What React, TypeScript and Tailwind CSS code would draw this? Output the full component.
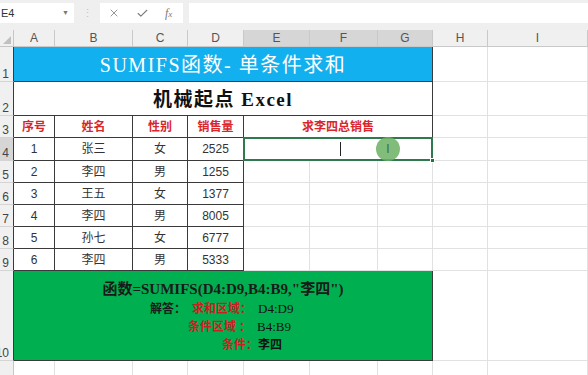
import React from "react";
import { X, Check } from "lucide-react";

const sans = "font-['Liberation_Sans','Noto_Sans_CJK_SC',sans-serif]";
const serif = "font-['Liberation_Serif','Noto_Sans_CJK_SC',serif]";

const cols = ["A", "B", "C", "D", "E", "F", "G", "H", "I"];
const rowHeights = "grid-rows-[17px_35px_34px_22px_23px_22px_22px_22px_22px_22px_90px_22px]";

const data = [
  ["1", "张三", "女", "2525"],
  ["2", "李四", "男", "1255"],
  ["3", "王五", "女", "1377"],
  ["4", "李四", "男", "8005"],
  ["5", "孙七", "女", "6777"],
  ["6", "李四", "男", "5333"],
];

const RowHead = ({ n, dark, active }: { n?: number; dark?: boolean; active?: boolean }) => (
  <div
    className={`flex items-end justify-end overflow-hidden border-b border-b-[#d4d4d4] pr-[4px] pb-[1px] text-[12px] leading-none text-[#444] ${
      active ? "bg-[#d6d6d6]" : "bg-[#f0f0f0]"
    } ${dark ? "border-r border-r-[#3a3a3a]" : "border-r border-r-[#c6c6c6]"}`}
  >
    {n}
  </div>
);

const Blank = () => <div className="border-b border-r border-[#e1e1e1] bg-white" />;

const Tail = () => (
  <>
    <Blank />
    <Blank />
  </>
);

export default function App() {
  return (
    <div className={`h-[375px] w-[588px] overflow-hidden bg-white ${sans}`}>
      {/* formula bar */}
      <div className="flex h-[30px] items-start bg-[#efefef] pt-[3px]">
        <div className="flex h-[20px] w-[74px] items-center justify-between bg-white pl-[1px] pr-[5px]">
          <span className="text-[11px] text-[#333]">E4</span>
          <span className="text-[7px] text-[#777]">▼</span>
        </div>
        <div className="flex h-[20px] w-[26px] items-center justify-center text-[11px] text-[#c4c4c4]">⋮</div>
        <div className="flex h-[20px] w-[83px] items-center gap-[16px] bg-white pl-[8px] text-[#7a7a7a]">
          <X size={12} strokeWidth={1.6} />
          <Check size={13} strokeWidth={2} />
          <span className="font-['Liberation_Serif',serif] text-[12px] italic">
            f<span className="text-[9px]">x</span>
          </span>
        </div>
        <div className="ml-[6px] h-[20px] flex-1 bg-white" />
      </div>

      {/* sheet */}
      <div className={`grid grid-cols-[14px_41px_78px_55px_56px_66px_68px_55px_55px_1fr] ${rowHeights}`}>
        {/* column headers */}
        <div className="relative border-b border-r border-[#c6c6c6] bg-[#f0f0f0]">
          <div className="absolute bottom-[2px] right-[2px] h-0 w-0 border-b-[8px] border-l-[8px] border-b-[#c0c0c0] border-l-transparent" />
        </div>
        {cols.map((c) => (
          <div
            key={c}
            className={`flex items-center justify-center border-b border-r border-[#c9c9c9] text-[12px] leading-none text-[#555] ${
              ["E", "F", "G"].includes(c) ? "bg-[#d6d6d6] text-[#333]" : "bg-[#f0f0f0]"
            }`}
          >
            {c}
          </div>
        ))}

        {/* row 1 */}
        <RowHead n={1} dark />
        <div
          className={`col-span-7 flex items-center justify-center border-b border-r border-[#3a3a3a] bg-[#12b0ee] pt-[2px] text-[20px] tracking-[1.5px] text-white ${serif}`}
        >
          SUMIFS函数- 单条件求和
        </div>
        <Tail />

        {/* row 2 */}
        <RowHead n={2} dark />
        <div
          className={`col-span-7 flex items-center justify-center border-b border-r border-[#3a3a3a] bg-white pt-[3px] text-[19px] font-bold tracking-[1.5px] text-[#111] ${serif}`}
        >
          机械起点 Excel
        </div>
        <Tail />

        {/* row 3 */}
        <RowHead n={3} dark />
        {["序号", "姓名", "性别", "销售量"].map((h) => (
          <div
            key={h}
            className="flex items-center justify-center border-b border-r border-[#3a3a3a] text-[12px] font-bold text-[#d9262b]"
          >
            {h}
          </div>
        ))}
        <div className="col-span-3 flex items-center justify-center border-b border-r border-[#3a3a3a] text-[12px] font-bold text-[#d9262b]">
          求李四总销售
        </div>
        <Tail />

        {/* rows 4-9 */}
        {data.map((r, i) => (
          <React.Fragment key={i}>
            <RowHead n={i + 4} dark active={i === 0} />
            {r.map((v, j) => (
              <div
                key={j}
                className="flex items-center justify-center border-b border-r border-[#3a3a3a] text-[12px] text-[#333]"
              >
                {v}
              </div>
            ))}
            {i === 0 ? (
              <div className="relative col-span-3 border-b border-r border-[#e1e1e1]">
                <div className="absolute -left-px -top-px bottom-[-1px] right-[-1px] border-2 border-[#2e7a4e]" />
                <div className="absolute bottom-[-3px] right-[-3px] h-[5px] w-[5px] border border-white bg-[#217346]" />
                <div className="absolute left-[96px] top-[4px] h-[14px] w-px bg-[#222]" />
                <div className="absolute left-[132px] top-[-1px] flex h-[24px] w-[24px] items-center justify-center rounded-full bg-[#6bb063]/85">
                  <span className="text-[12px] leading-none text-[#3d6d3a]">I</span>
                </div>
              </div>
            ) : (
              <>
                <Blank />
                <Blank />
                <Blank />
              </>
            )}
            <Tail />
          </React.Fragment>
        ))}

        {/* row 10 */}
        <RowHead n={10} dark />
        <div className={`col-span-7 flex flex-col border-b border-r border-[#3a3a3a] bg-[#00b050] pt-[9px] ${serif}`}>
          <div className="text-center text-[15px] font-bold leading-[18px] text-[#1a1a1a]">
            函数=SUMIFS(D4:D9,B4:B9,"李四")
          </div>
          <div className="mt-[2px] flex items-center pl-[136px] text-[12px] font-bold leading-[18px]">
            <span className="text-[#1a1a1a]">解答：</span>
            <span className="ml-[6px] text-[#c91f1f]">求和区域：</span>
            <span className="ml-[6px] text-[13px] font-normal text-[#111]">D4:D9</span>
          </div>
          <div className="flex items-center pl-[174px] text-[12px] font-bold leading-[18px]">
            <span className="text-[#c91f1f]">条件区域 ：</span>
            <span className="ml-[6px] text-[13px] font-normal text-[#111]">B4:B9</span>
          </div>
          <div className="flex items-center pl-[208px] text-[12px] font-bold leading-[18px]">
            <span className="text-[#c91f1f]">条件：</span>
            <span className="text-[#111]">李四</span>
          </div>
        </div>
        <Tail />

        {/* row 11 */}
        <RowHead />
        {cols.map((c) => (
          <Blank key={c} />
        ))}
      </div>
    </div>
  );
}
